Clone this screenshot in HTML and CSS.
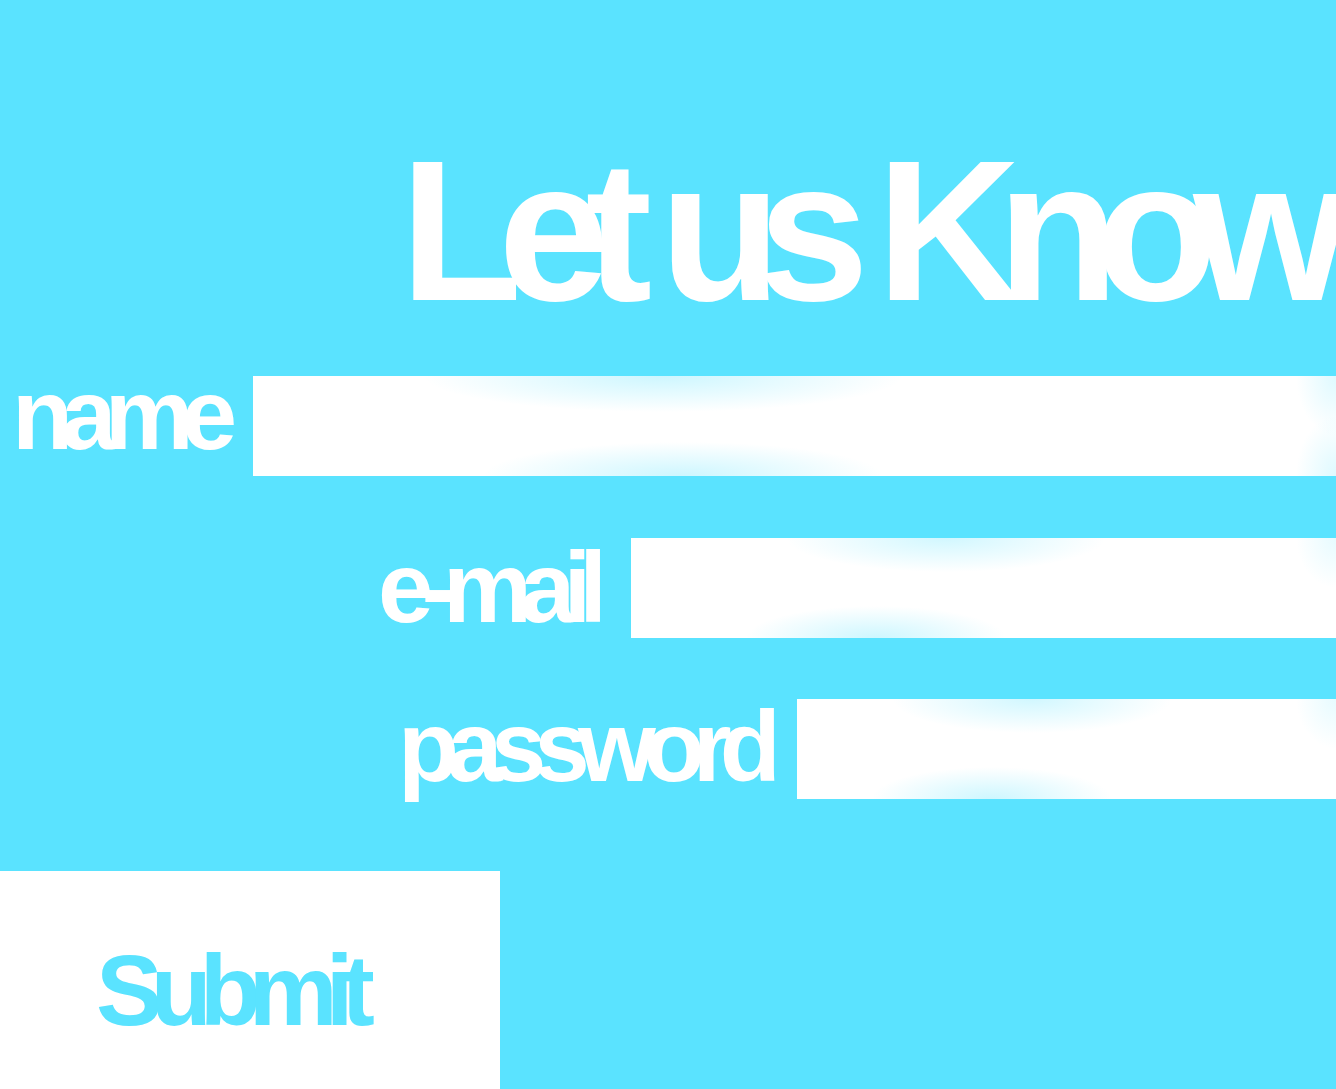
FILE: index.html
```html
<!DOCTYPE html>
<html lang="en">
<head>
<meta charset="utf-8">
<title>Let us Know</title>
<link rel="stylesheet" href="styles.css">
</head>
<body>
<main class="page">
  <h1 class="title">Let us Know</h1>
  <form class="form">
    <div class="field field--name">
      <label class="field__label" for="name">name</label>
      <input class="field__input" id="name" type="text">
    </div>
    <div class="field field--email">
      <label class="field__label" for="email">e-mail</label>
      <input class="field__input" id="email" type="email">
    </div>
    <div class="field field--password">
      <label class="field__label" for="password">password</label>
      <input class="field__input" id="password" type="password">
    </div>
    <button class="submit" type="button">Submit</button>
  </form>
</main>
</body>
</html>
```
FILE: styles.css
```css
html, body {
  margin: 0;
  padding: 0;
  overflow: hidden;
  background: #5ae3ff;
}

body {
  font-family: "Liberation Sans", Arial, sans-serif;
  font-weight: bold;
  color: #fff;
}

.page {
  box-sizing: border-box;
  height: 1089px;
  padding-top: 131px;
  overflow: hidden;
}

.title {
  margin: 0;
  padding-left: 400px;
  height: 200px;
  font-size: 200px;
  line-height: 200px;
  letter-spacing: -0.12em;
  white-space: nowrap;
  font-weight: bold;
}

.form {
  display: flex;
  flex-direction: column;
  margin: 45px 0 0;
}

.field {
  display: flex;
  align-items: flex-start;
  height: 100px;
}

.field + .field {
  margin-top: 61.5px;
}

.field__label {
  flex: none;
  font-size: 100px;
  line-height: 100px;
  letter-spacing: -0.12em;
  white-space: nowrap;
}

.field__input {
  flex: 1;
  min-width: 0;
  height: 100px;
  margin: 0;
  padding: 0;
  border: 0;
  outline: none;
  box-sizing: border-box;
  background-color: #fff;
}

.field--name {
  padding-left: 12px;
}
.field--name .field__label {
  width: 241px;
  margin-top: -12px;
}
.field--name .field__input {
  background-image:
    radial-gradient(ellipse 240px 36px at 410px 0, rgba(90, 227, 255, 0.3), rgba(90, 227, 255, 0)),
    radial-gradient(ellipse 200px 34px at 430px 100%, rgba(90, 227, 255, 0.3), rgba(90, 227, 255, 0)),
    radial-gradient(ellipse 40px 60px at 100% 0, rgba(90, 227, 255, 0.2), rgba(90, 227, 255, 0)),
    radial-gradient(ellipse 40px 60px at 100% 100%, rgba(90, 227, 255, 0.2), rgba(90, 227, 255, 0));
}

.field--email {
  padding-left: 378px;
}
.field--email .field__label {
  width: 253px;
  margin-top: -1px;
}
.field--email .field__input {
  background-image:
    radial-gradient(ellipse 160px 34px at 315px 0, rgba(90, 227, 255, 0.28), rgba(90, 227, 255, 0)),
    radial-gradient(ellipse 130px 32px at 245px 100%, rgba(90, 227, 255, 0.3), rgba(90, 227, 255, 0)),
    radial-gradient(ellipse 40px 50px at 100% 0, rgba(90, 227, 255, 0.15), rgba(90, 227, 255, 0));
}

.field--password {
  padding-left: 398px;
}
.field--password .field__label {
  width: 399px;
  margin-top: -3px;
}
.field--password .field__input {
  background-image:
    radial-gradient(ellipse 140px 34px at 235px 0, rgba(90, 227, 255, 0.28), rgba(90, 227, 255, 0)),
    radial-gradient(ellipse 120px 32px at 195px 100%, rgba(90, 227, 255, 0.3), rgba(90, 227, 255, 0)),
    radial-gradient(ellipse 40px 50px at 100% 0, rgba(90, 227, 255, 0.15), rgba(90, 227, 255, 0));
}

.submit {
  align-self: flex-start;
  box-sizing: border-box;
  width: 500px;
  height: 218px;
  margin-top: 72px;
  padding: 69px 0 49px 96px;
  border: 0;
  background: #fff;
  color: #5ae3ff;
  font-family: "Liberation Sans", Arial, sans-serif;
  font-weight: bold;
  font-size: 100px;
  line-height: 100px;
  letter-spacing: -0.12em;
  text-align: left;
  white-space: nowrap;
  cursor: pointer;
}
```
